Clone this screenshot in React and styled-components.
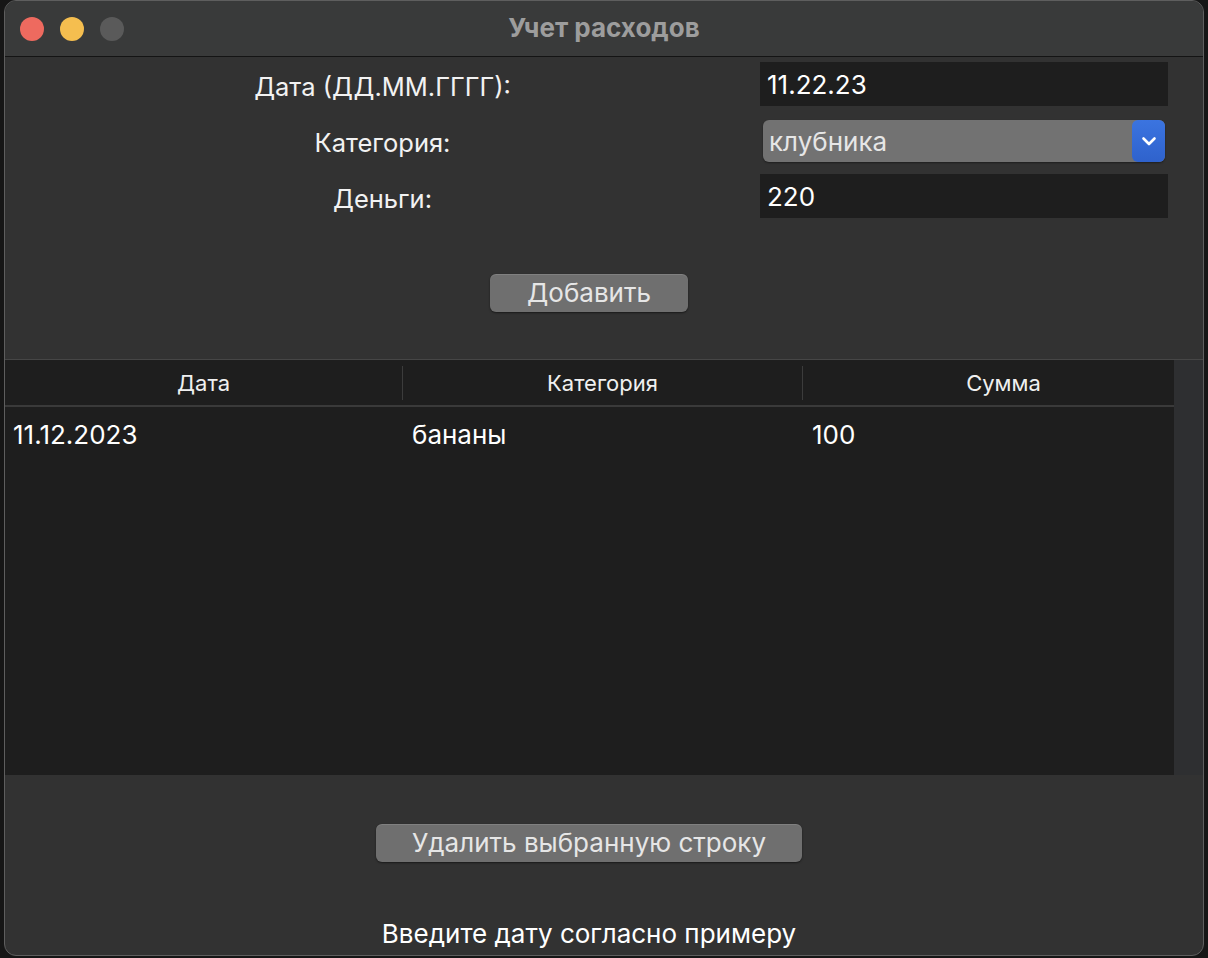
import React, { useState } from 'react'
import styled, { createGlobalStyle } from 'styled-components'

const GlobalStyle = createGlobalStyle`
  html, body {
    margin: 0;
    padding: 0;
    background: #161616;
    font-family: Inter, "Noto Sans", "Liberation Sans", sans-serif;
  }
  * { box-sizing: border-box; }
`

const Window = styled.div`
  margin-left: 4px;
  width: 1200px;
  height: 956px;
  background: #323232;
  border: 1px solid #5e5e5e;
  border-radius: 12px;
  overflow: hidden;
  display: flex;
  flex-direction: column;
`

const TitleBar = styled.header`
  height: 56px;
  flex-shrink: 0;
  display: grid;
  grid-template-columns: 1fr auto 1fr;
  align-items: center;
  background: #393a3a;
  border-bottom: 1px solid #141414;
  padding: 0 15px;
`

const Lights = styled.div`
  display: flex;
  gap: 16px;
`

const Light = styled.span`
  width: 24px;
  height: 24px;
  border-radius: 50%;
  background: ${p => p.color};
`

const Title = styled.h1`
  margin: 0 0 3px;
  font-size: 26px;
  font-weight: 700;
  color: #9d9d9d;
`

const Form = styled.section`
  display: grid;
  grid-template-columns: 755px 408px;
  grid-auto-rows: 44px;
  row-gap: 12px;
  padding-top: 5px;
  align-items: center;
`

const Label = styled.label`
  text-align: center;
  font-size: 25.5px;
  color: #f2f2f2;
  padding-top: 5px;
`

const Field = styled.input`
  height: 44px;
  width: 100%;
  border: none;
  outline: none;
  background: #1e1e1e;
  color: #ffffff;
  font-family: inherit;
  font-size: 26px;
  padding: 0 7px;
`

const SelectBox = styled.div`
  margin: 2px 3px 0;
  height: 42px;
  display: flex;
  align-items: center;
  justify-content: space-between;
  background: #727272;
  border-radius: 6px;
  padding-left: 6px;
  box-shadow: 0 1px 2px rgba(0, 0, 0, 0.4);
  color: #e6e6e6;
  font-size: 26px;
`

const SelectArrow = styled.span`
  width: 33px;
  height: 42px;
  border-radius: 6px;
  background: linear-gradient(#3b74e0, #2f62cc);
  display: flex;
  align-items: center;
  justify-content: center;
`

const ButtonRow = styled.div`
  display: flex;
  justify-content: center;
  padding-right: 30px;
  margin-top: ${p => p.top}px;
`

const Button = styled.button`
  height: 38px;
  width: ${p => p.w}px;
  border: none;
  border-radius: 6px;
  background: #6f6f6f;
  box-shadow: 0 1px 2px rgba(0, 0, 0, 0.5), inset 0 1px 0 rgba(255, 255, 255, 0.12);
  color: #e6e6e6;
  font-family: inherit;
  font-size: 26px;
  line-height: 38px;
  padding: 0;
  cursor: pointer;
`

const TableWrap = styled.div`
  margin-top: 47px;
  height: 416px;
  display: flex;
  border-top: 1px solid #464646;
`

const Table = styled.div`
  flex: 1;
  background: #1e1e1e;
`

const ScrollGutter = styled.div`
  width: 29px;
  background: #2e2f31;
`

const HeadRow = styled.div`
  display: grid;
  grid-template-columns: 397px 400px 1fr;
  height: 47px;
  align-items: center;
  border-bottom: 2px solid #3a3a3a;
`

const HeadCell = styled.div`
  text-align: center;
  font-size: 22px;
  color: #f0f0f0;
  border-left: ${p => (p.first ? 'none' : '1px solid #3c3c3c')};
  padding-left: ${p => p.indent || 0}px;
  line-height: 34px;
`

const BodyRow = styled.div`
  display: grid;
  grid-template-columns: 397px 400px 1fr;
  height: 54px;
  align-items: center;
`

const Cell = styled.div`
  padding-left: ${p => (p.first ? 8 : 10)}px;
  font-size: 26px;
  color: #ffffff;
`

const Status = styled.p`
  margin: 56px 0 0;
  text-align: center;
  padding-right: 30px;
  font-size: 26px;
  color: #ffffff;
`

function Chevron() {
  return (
    <svg width="18" height="18" viewBox="0 0 18 18" fill="none">
      <path d="M3.5 6.5 L9 12 L14.5 6.5" stroke="#fff" strokeWidth="2.6" strokeLinecap="round" strokeLinejoin="round" />
    </svg>
  )
}

export default function App() {
  const [date, setDate] = useState('11.22.23')
  const [money, setMoney] = useState('220')
  const rows = [{ date: '11.12.2023', category: 'бананы', sum: '100' }]

  return (
    <>
      <GlobalStyle />
      <Window>
        <TitleBar>
          <Lights>
            <Light color="#ee6a5f" />
            <Light color="#f5be4f" />
            <Light color="#5a5a5a" />
          </Lights>
          <Title>Учет расходов</Title>
          <span />
        </TitleBar>

        <Form>
          <Label>Дата (ДД.ММ.ГГГГ):</Label>
          <Field value={date} onChange={e => setDate(e.target.value)} />
          <Label>Категория:</Label>
          <SelectBox>
            клубника
            <SelectArrow><Chevron /></SelectArrow>
          </SelectBox>
          <Label>Деньги:</Label>
          <Field value={money} onChange={e => setMoney(e.target.value)} />
        </Form>

        <ButtonRow top={56}>
          <Button w={198}>Добавить</Button>
        </ButtonRow>

        <TableWrap>
          <Table>
            <HeadRow>
              <HeadCell first>Дата</HeadCell>
              <HeadCell>Категория</HeadCell>
              <HeadCell indent={30}>Сумма</HeadCell>
            </HeadRow>
            {rows.map((r, i) => (
              <BodyRow key={i}>
                <Cell first>{r.date}</Cell>
                <Cell>{r.category}</Cell>
                <Cell>{r.sum}</Cell>
              </BodyRow>
            ))}
          </Table>
          <ScrollGutter />
        </TableWrap>

        <ButtonRow top={49}>
          <Button w={426}>Удалить выбранную строку</Button>
        </ButtonRow>

        <Status>Введите дату согласно примеру</Status>
      </Window>
    </>
  )
}
